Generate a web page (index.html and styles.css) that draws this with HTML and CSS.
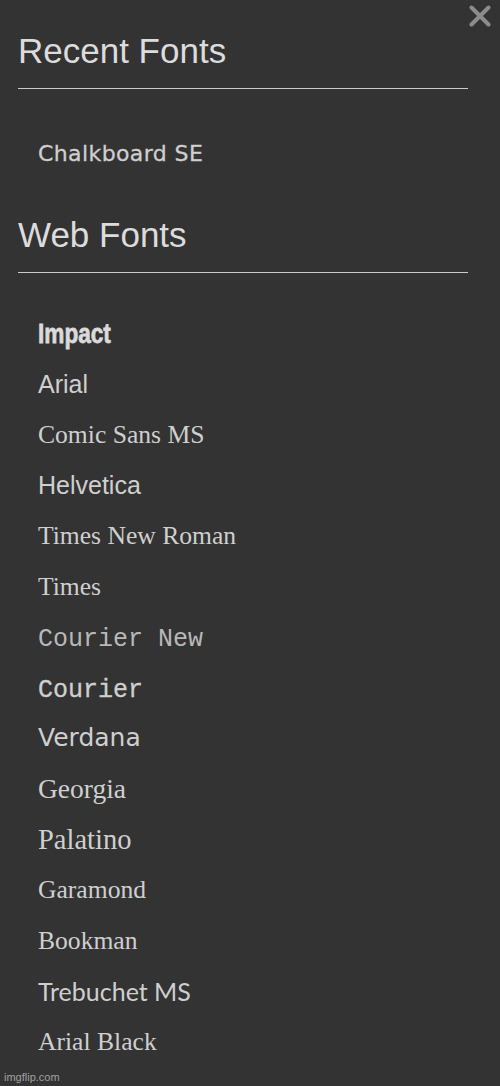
FILE: index.html
```html
<!DOCTYPE html>
<html>
	<head>
		<title>Fonts</title>
		<link rel="stylesheet" href="styles.css">
	</head>
	<body>
		<div class="panel">
			<button class="close" title="Close">
				<svg width="22" height="22" viewBox="0 0 22 22"><path d="M2.5 2.5 L19.5 19.5 M19.5 2.5 L2.5 19.5" stroke="#8c8c8c" stroke-width="4" stroke-linecap="round"/></svg>
			</button>

			<h2 class="section-title">Recent Fonts</h2>
			<ul class="font-list recent">
				<li class="f-chalk">Chalkboard SE</li>
			</ul>

			<h2 class="section-title">Web Fonts</h2>
			<ul class="font-list">
				<li class="f-impact"><span>Impact</span></li>
				<li class="f-sans">Arial</li>
				<li class="f-serif">Comic Sans MS</li>
				<li class="f-sans">Helvetica</li>
				<li class="f-serif">Times New Roman</li>
				<li class="f-serif">Times</li>
				<li class="f-mono thin">Courier New</li>
				<li class="f-mono heavy">Courier</li>
				<li class="f-verdana">Verdana</li>
				<li class="f-serif big">Georgia</li>
				<li class="f-serif bigger">Palatino</li>
				<li class="f-serif">Garamond</li>
				<li class="f-serif">Bookman</li>
				<li class="f-trebuchet">Trebuchet MS</li>
				<li class="f-serif">Arial Black</li>
			</ul>
		</div>
		<div class="watermark">imgflip.com</div>
	</body>
</html>
```

FILE: styles.css
```css
html, body {
	margin: 0;
	background: #333333;
}
body {
	height: 1086px;
	position: relative;
	overflow: hidden;
	font-family: "Liberation Sans", Arial, sans-serif;
	color: #cfcfcf;
}

.panel {
	position: relative;
	padding: 31px 0 0 18px;
}

.close {
	position: absolute;
	top: 5px;
	right: 9px;
	padding: 0;
	border: none;
	background: none;
	line-height: 0;
}

.section-title {
	margin: 0;
	width: 450px;
	padding: 0 0 17px 0;
	border-bottom: 1px solid #cccccc;
	font-size: 35px;
	line-height: 40px;
	font-weight: normal;
	color: #dcdcdc;
}

.font-list {
	list-style: none;
	margin: 0;
	padding: 36px 0 0 20px;
}
.font-list.recent {
	padding-top: 40px;
	padding-bottom: 35px;
}
.font-list li {
	height: 50.6px;
	line-height: 50.6px;
	font-size: 25px;
	white-space: nowrap;
}

.f-chalk {
	font-family: "DejaVu Sans", sans-serif;
	font-size: 22px !important;
	letter-spacing: 0.4px;
	-webkit-text-stroke: 0.3px #cfcfcf;
}
.f-impact {
	font-family: "Liberation Sans", Arial, sans-serif;
	font-weight: bold;
	font-size: 26px !important;
	color: #dadada;
}
.f-impact span {
	display: inline-block;
	transform: scale(0.87, 1.08);
	transform-origin: left 70%;
	-webkit-text-stroke: 0.7px #dadada;
}
.f-sans {
	font-family: "Liberation Sans", Arial, sans-serif;
}
.f-serif {
	font-family: "Liberation Serif", "Times New Roman", serif;
	font-size: 25.6px !important;
}
.f-serif.big {
	font-size: 27.5px !important;
}
.f-serif.bigger {
	font-size: 28.5px !important;
}
.f-mono {
	font-family: "Liberation Mono", "Courier New", monospace;
	padding-top: 3px;
	box-sizing: border-box;
}
.f-mono.thin {
	color: #b8b8b8;
}
.f-mono.heavy {
	-webkit-text-stroke: 0.3px #cfcfcf;
}
.f-verdana {
	font-family: "DejaVu Sans", Verdana, sans-serif;
}
.f-trebuchet {
	font-family: Lato, "Trebuchet MS", sans-serif;
	font-size: 25px !important;
}

.watermark {
	position: absolute;
	left: 4px;
	bottom: 3px;
	font-family: "Liberation Sans", Arial, sans-serif;
	font-size: 11px;
	color: #a0a0a0;
}
```
